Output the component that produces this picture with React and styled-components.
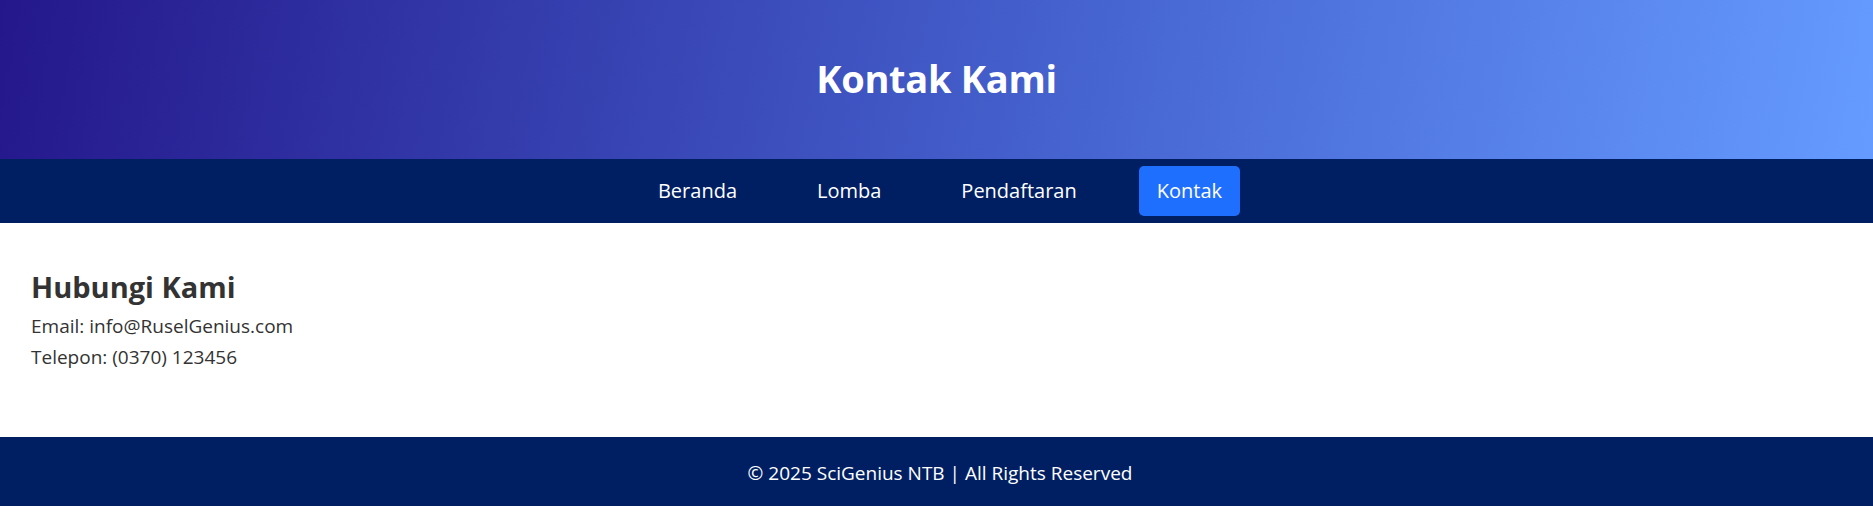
import styled, { createGlobalStyle } from 'styled-components';

const GlobalStyle = createGlobalStyle`
  body {
    margin: 0;
    font-family: "Open Sans", "Noto Sans", sans-serif;
    background: #ffffff;
    color: #333333;
  }
`

const links = ['Beranda', 'Lomba', 'Pendaftaran', 'Kontak'];

const App = () => {
  return (
    <>
      <GlobalStyle />
      <Header>
        <Title>Kontak Kami</Title>
      </Header>
      <Nav>
        {links.map((item) => (
          <NavLink key={item} href="#" active={item === 'Kontak' ? 1 : 0}>
            {item}
          </NavLink>
        ))}
      </Nav>
      <Section>
        <Heading>Hubungi Kami</Heading>
        <Line>Email: info@RuselGenius.com</Line>
        <Line>Telepon: (0370) 123456</Line>
      </Section>
      <Footer>
        <p>&copy; 2025 SciGenius NTB | All Rights Reserved</p>
      </Footer>
    </>
  )
};

const Header = styled.header`
  height: 159px;
  box-sizing: border-box;
  padding-bottom: 4px;
  display: flex;
  align-items: center;
  justify-content: center;
  background: linear-gradient(100deg, #24178b 0%, #4460cc 55%, #659bff 100%);
`

const Title = styled.h1`
  margin: 0;
  color: #ffffff;
  font-size: 38px;
  font-weight: 700;
  letter-spacing: -0.3px;
`

const Nav = styled.nav`
  height: 64px;
  background: #001f63;
  display: flex;
  justify-content: center;
  align-items: center;
  gap: 44px;
  padding-left: 7px;
`

const NavLink = styled.a`
  display: block;
  padding: 10px 18px;
  line-height: 30px;
  font-size: 20px;
  color: #ffffff;
  text-decoration: none;
  border-radius: 5px;
  background: ${(props) => (props.active ? '#1f6fff' : 'transparent')};
`

const Section = styled.section`
  height: 214px;
  box-sizing: border-box;
  padding: 47px 31px 0;
`

const Heading = styled.h2`
  margin: 0 0 8px;
  font-size: 29px;
  line-height: 34px;
  font-weight: 700;
  color: #333333;
`

const Line = styled.p`
  margin: 0 0 3px;
  font-size: 19px;
  line-height: 28px;
  color: #333333;
`

const Footer = styled.footer`
  height: 69px;
  background: #001f63;
  display: flex;
  align-items: center;
  justify-content: center;
  padding-left: 7px;

  p {
    margin: 0;
    color: #ffffff;
    font-size: 19px;
    padding-top: 3px;
  }
`

export default App;
